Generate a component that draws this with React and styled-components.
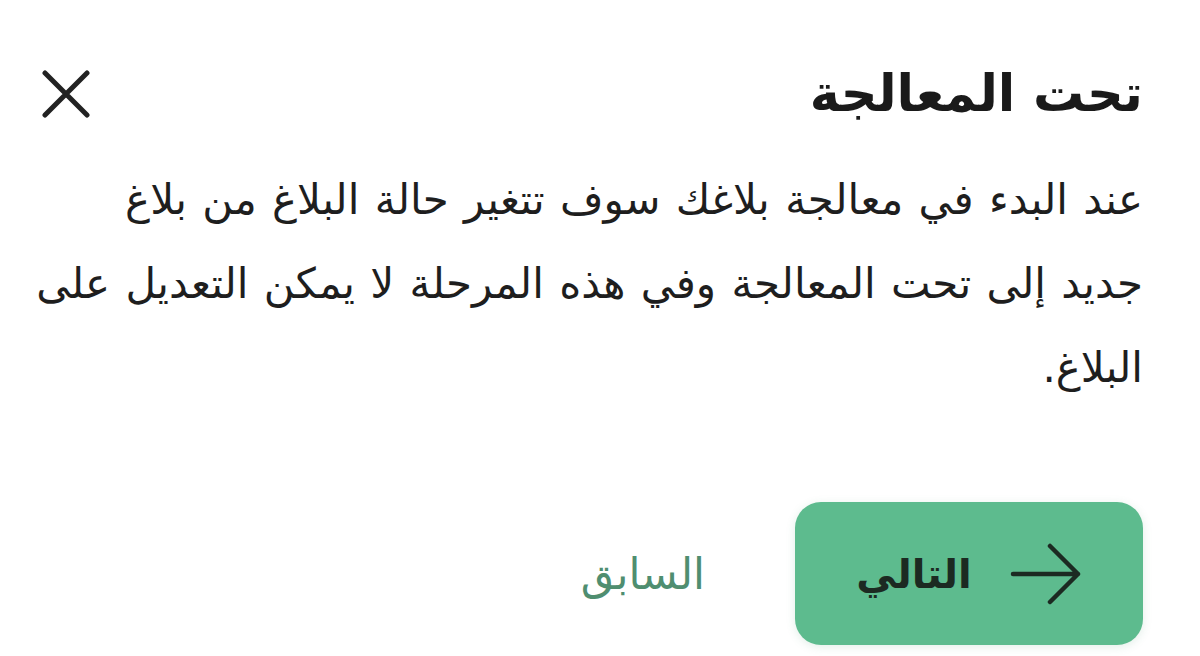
import React from 'react'
import styled, { createGlobalStyle } from 'styled-components'

const GlobalStyle = createGlobalStyle`
  html, body {
    margin: 0;
    padding: 0;
    background: #ffffff;
  }
  body {
    font-family: "DejaVu Sans", "Noto Sans", sans-serif;
    color: #1c1c1c;
  }
`

const Sheet = styled.div`
  direction: rtl;
  width: 1200px;
  height: 656px;
  box-sizing: border-box;
  padding: 52px 57px 0 20px;
  display: flex;
  flex-direction: column;
  overflow: hidden;
`

const Header = styled.div`
  display: flex;
  align-items: center;
  justify-content: space-between;
  padding-left: 22px;
  margin-bottom: 22px;
`

const Title = styled.h1`
  margin: 0;
  font-size: 51px;
  font-weight: 700;
  line-height: 84px;
  color: #1a1a1a;
`

const CloseButton = styled.button`
  border: 0;
  background: none;
  padding: 0;
  width: 48px;
  height: 48px;
  display: flex;
  align-items: center;
  justify-content: center;
  cursor: pointer;
  color: #222;
`

const Body = styled.p`
  margin: 0;
  font-size: 42px;
  line-height: 84px;
  word-spacing: 2px;
  color: #1e1e1e;
`

const Actions = styled.div`
  margin-top: auto;
  margin-bottom: 11px;
  display: flex;
  align-items: center;
  gap: 90px;
`

const NextButton = styled.button`
  width: 348px;
  height: 143px;
  border: 0;
  border-radius: 26px;
  background: #5dbb8e;
  box-shadow: 0 2px 10px rgba(60, 140, 100, 0.15);
  display: flex;
  align-items: center;
  justify-content: center;
  gap: 38px;
  font-family: inherit;
  font-size: 40px;
  font-weight: 700;
  color: #1c2a22;
  cursor: pointer;
`

const PrevButton = styled.button`
  border: 0;
  background: none;
  padding: 0;
  font-family: inherit;
  font-size: 43px;
  color: #4f8e70;
  cursor: pointer;
`

const XIcon = () => (
  <svg width="48" height="48" viewBox="0 0 48 48" fill="none">
    <path d="M3 3 L45 45 M45 3 L3 45" stroke="currentColor" strokeWidth="5" strokeLinecap="round" />
  </svg>
)

const ArrowIcon = () => (
  <svg width="72" height="62" viewBox="0 0 72 62" fill="none">
    <path d="M3 31 H68 M40 3 L68 31 L40 59" stroke="#1c2a22" strokeWidth="4.5" strokeLinecap="round" strokeLinejoin="round" />
  </svg>
)

export default function App() {
  return (
    <>
      <GlobalStyle />
      <Sheet>
        <Header>
          <Title>تحت المعالجة</Title>
          <CloseButton aria-label="إغلاق">
            <XIcon />
          </CloseButton>
        </Header>
        <Body>
          عند البدء في معالجة بلاغك سوف تتغير حالة البلاغ من بلاغ
          <br />
          جديد إلى تحت المعالجة وفي هذه المرحلة لا يمكن التعديل على
          <br />
          البلاغ.
        </Body>
        <Actions>
          <NextButton>
            <ArrowIcon />
            <span>التالي</span>
          </NextButton>
          <PrevButton>السابق</PrevButton>
        </Actions>
      </Sheet>
    </>
  )
}
